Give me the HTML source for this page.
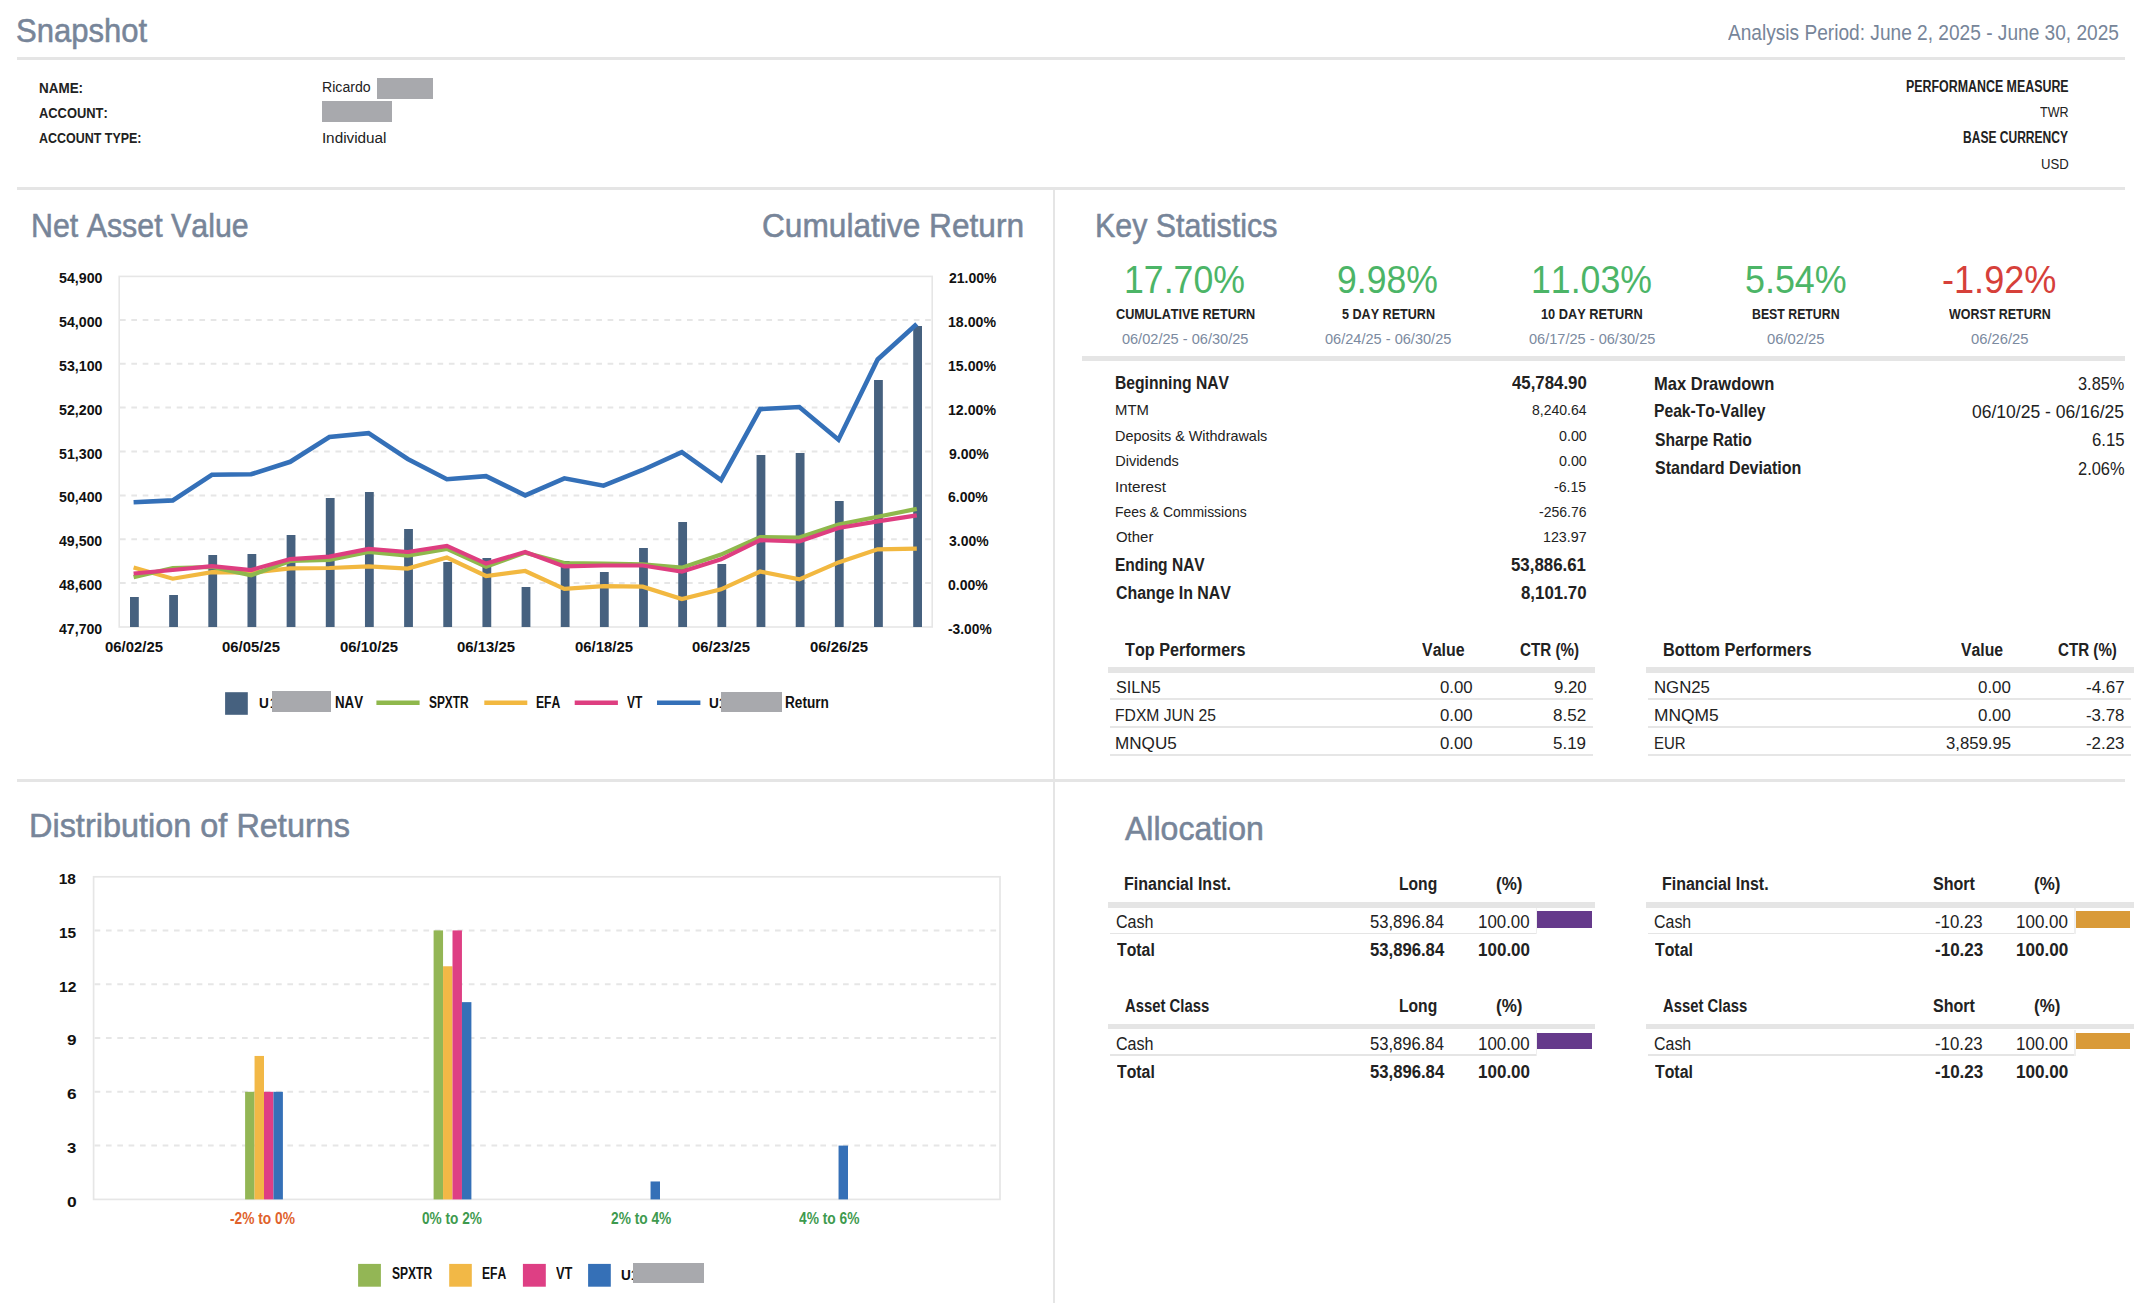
<!DOCTYPE html>
<html><head><meta charset="utf-8"><title>Snapshot</title>
<style>
html,body{margin:0;padding:0;background:#fff;}
body{width:2152px;height:1303px;position:relative;overflow:hidden;font-family:"Liberation Sans",sans-serif;}
.t{position:absolute;white-space:nowrap;transform-origin:0 0;font-kerning:none;z-index:3;}
.r{position:absolute;}
svg{position:absolute;left:0;top:0;}
</style></head><body>
<svg width="2152" height="1303" viewBox="0 0 2152 1303">
<rect x="119.2" y="276.4" width="813" height="350.6" fill="none" stroke="#e6e6e6" stroke-width="1.6"/>
<line x1="120" y1="319.88" x2="931" y2="319.88" stroke="#e6e6e6" stroke-width="2" stroke-dasharray="5.67 5.67"/>
<line x1="120" y1="363.75" x2="931" y2="363.75" stroke="#e6e6e6" stroke-width="2" stroke-dasharray="5.67 5.67"/>
<line x1="120" y1="407.62" x2="931" y2="407.62" stroke="#e6e6e6" stroke-width="2" stroke-dasharray="5.67 5.67"/>
<line x1="120" y1="451.50" x2="931" y2="451.50" stroke="#e6e6e6" stroke-width="2" stroke-dasharray="5.67 5.67"/>
<line x1="120" y1="495.38" x2="931" y2="495.38" stroke="#e6e6e6" stroke-width="2" stroke-dasharray="5.67 5.67"/>
<line x1="120" y1="539.25" x2="931" y2="539.25" stroke="#e6e6e6" stroke-width="2" stroke-dasharray="5.67 5.67"/>
<line x1="120" y1="583.12" x2="931" y2="583.12" stroke="#e6e6e6" stroke-width="2" stroke-dasharray="5.67 5.67"/>
<rect x="130.00" y="597.00" width="8.8" height="30.00" fill="#46617f"/>
<rect x="169.16" y="595.00" width="8.8" height="32.00" fill="#46617f"/>
<rect x="208.32" y="555.00" width="8.8" height="72.00" fill="#46617f"/>
<rect x="247.48" y="554.00" width="8.8" height="73.00" fill="#46617f"/>
<rect x="286.64" y="535.00" width="8.8" height="92.00" fill="#46617f"/>
<rect x="325.80" y="498.00" width="8.8" height="129.00" fill="#46617f"/>
<rect x="364.96" y="492.00" width="8.8" height="135.00" fill="#46617f"/>
<rect x="404.12" y="529.00" width="8.8" height="98.00" fill="#46617f"/>
<rect x="443.28" y="562.00" width="8.8" height="65.00" fill="#46617f"/>
<rect x="482.44" y="558.00" width="8.8" height="69.00" fill="#46617f"/>
<rect x="521.60" y="587.00" width="8.8" height="40.00" fill="#46617f"/>
<rect x="560.76" y="561.00" width="8.8" height="66.00" fill="#46617f"/>
<rect x="599.92" y="572.00" width="8.8" height="55.00" fill="#46617f"/>
<rect x="639.08" y="548.00" width="8.8" height="79.00" fill="#46617f"/>
<rect x="678.24" y="522.00" width="8.8" height="105.00" fill="#46617f"/>
<rect x="717.40" y="564.00" width="8.8" height="63.00" fill="#46617f"/>
<rect x="756.56" y="455.00" width="8.8" height="172.00" fill="#46617f"/>
<rect x="795.72" y="453.00" width="8.8" height="174.00" fill="#46617f"/>
<rect x="834.88" y="501.00" width="8.8" height="126.00" fill="#46617f"/>
<rect x="874.04" y="380.00" width="8.8" height="247.00" fill="#46617f"/>
<rect x="913.20" y="326.00" width="8.8" height="301.00" fill="#46617f"/>
<polyline points="133.60,567.50 172.76,578.70 211.92,572.20 251.08,572.70 290.24,568.30 329.40,568.00 368.56,566.40 407.72,568.60 446.88,557.50 486.04,576.00 525.20,571.00 564.36,588.90 603.52,586.10 642.68,586.70 681.84,599.00 721.00,589.30 760.16,571.50 799.32,579.40 838.48,562.40 877.64,549.30 916.80,548.60" fill="none" stroke="#f2b840" stroke-width="4.2" stroke-linejoin="miter" stroke-linecap="butt"/>
<polyline points="133.60,577.10 172.76,568.00 211.92,567.00 251.08,575.30 290.24,561.00 329.40,560.00 368.56,552.00 407.72,555.70 446.88,548.90 486.04,566.80 525.20,552.60 564.36,563.10 603.52,563.60 642.68,564.40 681.84,567.70 721.00,554.60 760.16,537.10 799.32,537.60 838.48,524.50 877.64,516.70 916.80,508.90" fill="none" stroke="#8fb84c" stroke-width="4.2" stroke-linejoin="miter" stroke-linecap="butt"/>
<polyline points="133.60,573.50 172.76,570.00 211.92,566.20 251.08,570.00 290.24,559.10 329.40,556.60 368.56,548.90 407.72,552.00 446.88,545.90 486.04,563.60 525.20,552.00 564.36,566.40 603.52,565.50 642.68,565.50 681.84,571.70 721.00,559.30 760.16,540.20 799.32,541.50 838.48,528.00 877.64,521.40 916.80,515.40" fill="none" stroke="#de3e80" stroke-width="4.2" stroke-linejoin="miter" stroke-linecap="butt"/>
<polyline points="133.60,502.20 172.76,500.40 211.92,474.80 251.08,474.30 290.24,461.80 329.40,437.00 368.56,433.20 407.72,459.00 446.88,479.20 486.04,476.10 525.20,495.40 564.36,478.30 603.52,485.70 642.68,470.00 681.84,452.10 721.00,480.20 760.16,409.10 799.32,407.00 838.48,439.70 877.64,359.50 916.80,324.00" fill="none" stroke="#3470b8" stroke-width="4.6" stroke-linejoin="miter" stroke-linecap="butt"/>
<rect x="225.1" y="692.2" width="22.7" height="22.6" fill="#46617f"/>
<line x1="376.4" y1="702.7" x2="419.6" y2="702.7" stroke="#8fb84c" stroke-width="4.5"/>
<line x1="484.3" y1="702.7" x2="527.3" y2="702.7" stroke="#f2b840" stroke-width="4.5"/>
<line x1="574.7" y1="702.7" x2="617.9" y2="702.7" stroke="#de3e80" stroke-width="4.5"/>
<line x1="657.0" y1="702.7" x2="700.4" y2="702.7" stroke="#3470b8" stroke-width="4.5"/>
<rect x="93.6" y="876.8" width="906.4" height="322.6" fill="none" stroke="#e6e6e6" stroke-width="1.7"/>
<line x1="94.6" y1="930.40" x2="999" y2="930.40" stroke="#e6e6e6" stroke-width="2" stroke-dasharray="5.67 5.67"/>
<line x1="94.6" y1="984.20" x2="999" y2="984.20" stroke="#e6e6e6" stroke-width="2" stroke-dasharray="5.67 5.67"/>
<line x1="94.6" y1="1038.00" x2="999" y2="1038.00" stroke="#e6e6e6" stroke-width="2" stroke-dasharray="5.67 5.67"/>
<line x1="94.6" y1="1091.80" x2="999" y2="1091.80" stroke="#e6e6e6" stroke-width="2" stroke-dasharray="5.67 5.67"/>
<line x1="94.6" y1="1145.60" x2="999" y2="1145.60" stroke="#e6e6e6" stroke-width="2" stroke-dasharray="5.67 5.67"/>
<rect x="245.10" y="1091.80" width="9.45" height="107.60" fill="#93b655"/>
<rect x="254.55" y="1055.94" width="9.45" height="143.46" fill="#f2b846"/>
<rect x="264.00" y="1091.80" width="9.45" height="107.60" fill="#de3f84"/>
<rect x="273.45" y="1091.80" width="9.45" height="107.60" fill="#3570b7"/>
<rect x="433.60" y="930.41" width="9.45" height="269.00" fill="#93b655"/>
<rect x="443.05" y="966.27" width="9.45" height="233.13" fill="#f2b846"/>
<rect x="452.50" y="930.41" width="9.45" height="269.00" fill="#de3f84"/>
<rect x="461.95" y="1002.14" width="9.45" height="197.26" fill="#3570b7"/>
<rect x="650.55" y="1181.47" width="9.45" height="17.93" fill="#3570b7"/>
<rect x="838.55" y="1145.60" width="9.45" height="53.80" fill="#3570b7"/>
<rect x="358.1" y="1263.9" width="22.8" height="22.8" fill="#93b655"/>
<rect x="449.2" y="1263.9" width="22.6" height="22.8" fill="#f2b846"/>
<rect x="522.9" y="1263.9" width="22.9" height="22.8" fill="#de3f84"/>
<rect x="588.1" y="1263.9" width="22.7" height="22.8" fill="#3570b7"/>
</svg>
<div class="t" style="left:16.29px;top:13.01px;font-size:34.00px;line-height:34.00px;color:#778599;transform:scaleX(0.9135);-webkit-text-stroke:0.55px #778599;">Snapshot</div>
<div class="t" style="left:1727.76px;top:22.88px;font-size:21.40px;line-height:21.40px;color:#778599;transform:scaleX(0.8934);">Analysis Period: June 2, 2025 - June 30, 2025</div>
<div class="r" style="left:17.00px;top:57.00px;width:2108.00px;height:3.00px;background:#e5e5e5;"></div>
<div class="t" style="left:38.90px;top:79.68px;font-size:15.50px;line-height:15.50px;color:#222222;font-weight:bold;transform:scaleX(0.8680);">NAME:</div>
<div class="t" style="left:39.48px;top:104.68px;font-size:15.50px;line-height:15.50px;color:#222222;font-weight:bold;transform:scaleX(0.8319);">ACCOUNT:</div>
<div class="t" style="left:39.49px;top:130.48px;font-size:15.50px;line-height:15.50px;color:#222222;font-weight:bold;transform:scaleX(0.8044);">ACCOUNT TYPE:</div>
<div class="t" style="left:322.14px;top:79.45px;font-size:15.30px;line-height:15.30px;color:#222222;transform:scaleX(0.9228);">Ricardo</div>
<div class="r" style="left:377.00px;top:78.20px;width:55.60px;height:20.70px;background:#a8a9ad;"></div>
<div class="r" style="left:322.20px;top:101.20px;width:69.80px;height:20.50px;background:#a8a9ad;"></div>
<div class="t" style="left:321.89px;top:130.25px;font-size:15.30px;line-height:15.30px;color:#222222;">Individual</div>
<div class="t" style="left:1905.97px;top:79.15px;font-size:16.00px;line-height:16.00px;color:#222222;font-weight:bold;transform:scaleX(0.7751);">PERFORMANCE MEASURE</div>
<div class="t" style="left:2040.12px;top:105.32px;font-size:14.50px;line-height:14.50px;color:#222222;transform:scaleX(0.8652);">TWR</div>
<div class="t" style="left:1963.29px;top:130.25px;font-size:16.00px;line-height:16.00px;color:#222222;font-weight:bold;transform:scaleX(0.7523);">BASE CURRENCY</div>
<div class="t" style="left:2040.99px;top:156.72px;font-size:14.50px;line-height:14.50px;color:#222222;transform:scaleX(0.9062);">USD</div>
<div class="r" style="left:17.00px;top:187.00px;width:2108.00px;height:3.00px;background:#e5e5e5;"></div>
<div class="r" style="left:1053.00px;top:190.00px;width:2.40px;height:1113.00px;background:#e5e5e5;"></div>
<div class="r" style="left:17.00px;top:779.00px;width:2108.00px;height:3.00px;background:#e5e5e5;"></div>
<div class="t" style="left:31.01px;top:208.80px;font-size:33.30px;line-height:33.30px;color:#778599;transform:scaleX(0.9119);-webkit-text-stroke:0.55px #778599;">Net Asset Value</div>
<div class="t" style="left:761.69px;top:208.50px;font-size:33.30px;line-height:33.30px;color:#778599;transform:scaleX(0.9503);-webkit-text-stroke:0.55px #778599;">Cumulative Return</div>
<div class="r" style="left:272.00px;top:691.30px;width:59.20px;height:20.50px;background:#a8a9ad;z-index:4;"></div>
<div class="r" style="left:721.40px;top:691.60px;width:60.90px;height:20.30px;background:#a8a9ad;z-index:4;"></div>
<div class="t" style="left:259.18px;top:694.73px;font-size:15.20px;line-height:15.20px;color:#111111;font-weight:bold;transform:scaleX(0.8975);">U</div>
<div class="t" style="left:269.60px;top:694.73px;font-size:15.20px;line-height:15.20px;color:#111111;font-weight:bold;transform:scaleX(0.7352);">1</div>
<div class="t" style="left:334.61px;top:694.62px;font-size:15.80px;line-height:15.80px;color:#111111;font-weight:bold;transform:scaleX(0.8418);">NAV</div>
<div class="t" style="left:428.66px;top:694.62px;font-size:15.80px;line-height:15.80px;color:#111111;font-weight:bold;transform:scaleX(0.7515);">SPXTR</div>
<div class="t" style="left:536.39px;top:694.62px;font-size:15.80px;line-height:15.80px;color:#111111;font-weight:bold;transform:scaleX(0.7701);">EFA</div>
<div class="t" style="left:627.42px;top:694.62px;font-size:15.80px;line-height:15.80px;color:#111111;font-weight:bold;transform:scaleX(0.7583);">VT</div>
<div class="t" style="left:708.68px;top:695.13px;font-size:15.20px;line-height:15.20px;color:#111111;font-weight:bold;transform:scaleX(0.8975);">U</div>
<div class="t" style="left:718.90px;top:695.13px;font-size:15.20px;line-height:15.20px;color:#111111;font-weight:bold;transform:scaleX(0.7352);">1</div>
<div class="t" style="left:785.29px;top:694.62px;font-size:15.80px;line-height:15.80px;color:#111111;font-weight:bold;transform:scaleX(0.8635);">Return</div>
<div class="t" style="left:59.06px;top:270.08px;font-size:15.50px;line-height:15.50px;color:#111111;font-weight:bold;transform:scaleX(0.9159);">54,900</div>
<div class="t" style="left:948.51px;top:270.08px;font-size:15.50px;line-height:15.50px;color:#111111;font-weight:bold;transform:scaleX(0.9046);">21.00%</div>
<div class="t" style="left:59.06px;top:313.95px;font-size:15.50px;line-height:15.50px;color:#111111;font-weight:bold;transform:scaleX(0.9159);">54,000</div>
<div class="t" style="left:948.11px;top:313.95px;font-size:15.50px;line-height:15.50px;color:#111111;font-weight:bold;transform:scaleX(0.9124);">18.00%</div>
<div class="t" style="left:59.06px;top:357.83px;font-size:15.50px;line-height:15.50px;color:#111111;font-weight:bold;transform:scaleX(0.9159);">53,100</div>
<div class="t" style="left:948.11px;top:357.83px;font-size:15.50px;line-height:15.50px;color:#111111;font-weight:bold;transform:scaleX(0.9124);">15.00%</div>
<div class="t" style="left:59.06px;top:401.70px;font-size:15.50px;line-height:15.50px;color:#111111;font-weight:bold;transform:scaleX(0.9159);">52,200</div>
<div class="t" style="left:948.11px;top:401.70px;font-size:15.50px;line-height:15.50px;color:#111111;font-weight:bold;transform:scaleX(0.9124);">12.00%</div>
<div class="t" style="left:59.06px;top:445.58px;font-size:15.50px;line-height:15.50px;color:#111111;font-weight:bold;transform:scaleX(0.9159);">51,300</div>
<div class="t" style="left:948.51px;top:445.58px;font-size:15.50px;line-height:15.50px;color:#111111;font-weight:bold;transform:scaleX(0.9046);">9.00%</div>
<div class="t" style="left:59.06px;top:489.45px;font-size:15.50px;line-height:15.50px;color:#111111;font-weight:bold;transform:scaleX(0.9159);">50,400</div>
<div class="t" style="left:948.49px;top:489.45px;font-size:15.50px;line-height:15.50px;color:#111111;font-weight:bold;transform:scaleX(0.9052);">6.00%</div>
<div class="t" style="left:59.29px;top:533.33px;font-size:15.50px;line-height:15.50px;color:#111111;font-weight:bold;transform:scaleX(0.9111);">49,500</div>
<div class="t" style="left:948.68px;top:533.33px;font-size:15.50px;line-height:15.50px;color:#111111;font-weight:bold;transform:scaleX(0.9008);">3.00%</div>
<div class="t" style="left:59.29px;top:577.20px;font-size:15.50px;line-height:15.50px;color:#111111;font-weight:bold;transform:scaleX(0.9111);">48,600</div>
<div class="t" style="left:948.44px;top:577.20px;font-size:15.50px;line-height:15.50px;color:#111111;font-weight:bold;transform:scaleX(0.9062);">0.00%</div>
<div class="t" style="left:59.29px;top:621.08px;font-size:15.50px;line-height:15.50px;color:#111111;font-weight:bold;transform:scaleX(0.9111);">47,700</div>
<div class="t" style="left:948.46px;top:621.08px;font-size:15.50px;line-height:15.50px;color:#111111;font-weight:bold;transform:scaleX(0.8899);">-3.00%</div>
<div class="t" style="left:105.01px;top:639.28px;font-size:15.50px;line-height:15.50px;color:#111111;font-weight:bold;transform:scaleX(0.9614);">06/02/25</div>
<div class="t" style="left:222.49px;top:639.28px;font-size:15.50px;line-height:15.50px;color:#111111;font-weight:bold;transform:scaleX(0.9614);">06/05/25</div>
<div class="t" style="left:339.97px;top:639.28px;font-size:15.50px;line-height:15.50px;color:#111111;font-weight:bold;transform:scaleX(0.9614);">06/10/25</div>
<div class="t" style="left:457.45px;top:639.28px;font-size:15.50px;line-height:15.50px;color:#111111;font-weight:bold;transform:scaleX(0.9614);">06/13/25</div>
<div class="t" style="left:574.93px;top:639.28px;font-size:15.50px;line-height:15.50px;color:#111111;font-weight:bold;transform:scaleX(0.9614);">06/18/25</div>
<div class="t" style="left:692.41px;top:639.28px;font-size:15.50px;line-height:15.50px;color:#111111;font-weight:bold;transform:scaleX(0.9614);">06/23/25</div>
<div class="t" style="left:809.89px;top:639.28px;font-size:15.50px;line-height:15.50px;color:#111111;font-weight:bold;transform:scaleX(0.9614);">06/26/25</div>
<div class="t" style="left:1095.21px;top:208.80px;font-size:33.30px;line-height:33.30px;color:#778599;transform:scaleX(0.9126);-webkit-text-stroke:0.55px #778599;">Key Statistics</div>
<div class="t" style="left:1123.98px;top:260.83px;font-size:38.00px;line-height:38.00px;color:#4cb567;transform:scaleX(0.9388);">17.70%</div>
<div class="t" style="left:1115.73px;top:306.21px;font-size:15.10px;line-height:15.10px;color:#222222;font-weight:bold;transform:scaleX(0.8385);">CUMULATIVE RETURN</div>
<div class="t" style="left:1121.88px;top:331.54px;font-size:14.60px;line-height:14.60px;color:#7b8aa0;">06/02/25 - 06/30/25</div>
<div class="t" style="left:1337.33px;top:260.83px;font-size:38.00px;line-height:38.00px;color:#4cb567;transform:scaleX(0.9368);">9.98%</div>
<div class="t" style="left:1341.71px;top:306.21px;font-size:15.10px;line-height:15.10px;color:#222222;font-weight:bold;transform:scaleX(0.8338);">5 DAY RETURN</div>
<div class="t" style="left:1324.83px;top:331.54px;font-size:14.60px;line-height:14.60px;color:#7b8aa0;transform:scaleX(0.9980);">06/24/25 - 06/30/25</div>
<div class="t" style="left:1530.58px;top:260.83px;font-size:38.00px;line-height:38.00px;color:#4cb567;transform:scaleX(0.9388);">11.03%</div>
<div class="t" style="left:1540.99px;top:306.21px;font-size:15.10px;line-height:15.10px;color:#222222;font-weight:bold;transform:scaleX(0.8474);">10 DAY RETURN</div>
<div class="t" style="left:1528.63px;top:331.54px;font-size:14.60px;line-height:14.60px;color:#7b8aa0;transform:scaleX(0.9980);">06/17/25 - 06/30/25</div>
<div class="t" style="left:1745.26px;top:260.83px;font-size:38.00px;line-height:38.00px;color:#4cb567;transform:scaleX(0.9440);">5.54%</div>
<div class="t" style="left:1752.43px;top:306.21px;font-size:15.10px;line-height:15.10px;color:#222222;font-weight:bold;transform:scaleX(0.8154);">BEST RETURN</div>
<div class="t" style="left:1767.42px;top:331.54px;font-size:14.60px;line-height:14.60px;color:#7b8aa0;transform:scaleX(1.0135);">06/02/25</div>
<div class="t" style="left:1942.15px;top:260.83px;font-size:38.00px;line-height:38.00px;color:#d6403a;transform:scaleX(0.9501);">-1.92%</div>
<div class="t" style="left:1949.09px;top:306.21px;font-size:15.10px;line-height:15.10px;color:#222222;font-weight:bold;transform:scaleX(0.8244);">WORST RETURN</div>
<div class="t" style="left:1970.72px;top:331.54px;font-size:14.60px;line-height:14.60px;color:#7b8aa0;transform:scaleX(1.0135);">06/26/25</div>
<div class="r" style="left:1082.00px;top:355.50px;width:1043.00px;height:5.80px;background:#e5e5e5;"></div>
<div class="t" style="left:1115.35px;top:374.10px;font-size:18.90px;line-height:18.90px;color:#222222;font-weight:bold;transform:scaleX(0.8292);">Beginning NAV</div>
<div class="t" style="left:1511.85px;top:374.10px;font-size:18.90px;line-height:18.90px;color:#222222;font-weight:bold;transform:scaleX(0.8901);">45,784.90</div>
<div class="t" style="left:1115.18px;top:402.92px;font-size:14.50px;line-height:14.50px;color:#222222;transform:scaleX(1.0250);">MTM</div>
<div class="t" style="left:1531.79px;top:402.92px;font-size:14.50px;line-height:14.50px;color:#222222;transform:scaleX(0.9677);">8,240.64</div>
<div class="t" style="left:1115.22px;top:429.32px;font-size:14.50px;line-height:14.50px;color:#222222;transform:scaleX(0.9948);">Deposits &amp; Withdrawals</div>
<div class="t" style="left:1558.74px;top:429.32px;font-size:14.50px;line-height:14.50px;color:#222222;transform:scaleX(0.9857);">0.00</div>
<div class="t" style="left:1115.21px;top:454.32px;font-size:14.50px;line-height:14.50px;color:#222222;">Dividends</div>
<div class="t" style="left:1558.74px;top:454.32px;font-size:14.50px;line-height:14.50px;color:#222222;transform:scaleX(0.9857);">0.00</div>
<div class="t" style="left:1114.99px;top:479.92px;font-size:14.50px;line-height:14.50px;color:#222222;transform:scaleX(1.0530);">Interest</div>
<div class="t" style="left:1554.37px;top:479.92px;font-size:14.50px;line-height:14.50px;color:#222222;transform:scaleX(0.9749);">-6.15</div>
<div class="t" style="left:1115.26px;top:505.02px;font-size:14.50px;line-height:14.50px;color:#222222;transform:scaleX(0.9611);">Fees &amp; Commissions</div>
<div class="t" style="left:1539.08px;top:505.02px;font-size:14.50px;line-height:14.50px;color:#222222;transform:scaleX(0.9667);">-256.76</div>
<div class="t" style="left:1115.69px;top:530.12px;font-size:14.50px;line-height:14.50px;color:#222222;transform:scaleX(1.0301);">Other</div>
<div class="t" style="left:1543.11px;top:530.12px;font-size:14.50px;line-height:14.50px;color:#222222;transform:scaleX(0.9832);">123.97</div>
<div class="t" style="left:1115.36px;top:555.50px;font-size:18.90px;line-height:18.90px;color:#222222;font-weight:bold;transform:scaleX(0.8219);">Ending NAV</div>
<div class="t" style="left:1511.48px;top:555.50px;font-size:18.90px;line-height:18.90px;color:#222222;font-weight:bold;transform:scaleX(0.8919);">53,886.61</div>
<div class="t" style="left:1115.75px;top:583.60px;font-size:18.90px;line-height:18.90px;color:#222222;font-weight:bold;transform:scaleX(0.8422);">Change In NAV</div>
<div class="t" style="left:1521.06px;top:583.60px;font-size:18.90px;line-height:18.90px;color:#222222;font-weight:bold;transform:scaleX(0.8920);">8,101.70</div>
<div class="t" style="left:1653.99px;top:374.54px;font-size:18.50px;line-height:18.50px;color:#222222;font-weight:bold;transform:scaleX(0.8936);">Max Drawdown</div>
<div class="t" style="left:2077.98px;top:375.93px;font-size:17.80px;line-height:17.80px;color:#222222;transform:scaleX(0.9195);">3.85%</div>
<div class="t" style="left:1654.05px;top:402.44px;font-size:18.50px;line-height:18.50px;color:#222222;font-weight:bold;transform:scaleX(0.8467);">Peak-To-Valley</div>
<div class="t" style="left:1972.31px;top:403.83px;font-size:17.80px;line-height:17.80px;color:#222222;transform:scaleX(0.9859);">06/10/25 - 06/16/25</div>
<div class="t" style="left:1654.65px;top:430.84px;font-size:18.50px;line-height:18.50px;color:#222222;font-weight:bold;transform:scaleX(0.8498);">Sharpe Ratio</div>
<div class="t" style="left:2091.85px;top:432.23px;font-size:17.80px;line-height:17.80px;color:#222222;transform:scaleX(0.9426);">6.15</div>
<div class="t" style="left:1654.64px;top:459.34px;font-size:18.50px;line-height:18.50px;color:#222222;font-weight:bold;transform:scaleX(0.8682);">Standard Deviation</div>
<div class="t" style="left:2077.77px;top:460.73px;font-size:17.80px;line-height:17.80px;color:#222222;transform:scaleX(0.9236);">2.06%</div>
<div class="t" style="left:1124.52px;top:641.01px;font-size:18.30px;line-height:18.30px;color:#222222;font-weight:bold;transform:scaleX(0.8846);">Top Performers</div>
<div class="t" style="left:1422.39px;top:641.01px;font-size:18.30px;line-height:18.30px;color:#222222;font-weight:bold;transform:scaleX(0.8716);">Value</div>
<div class="t" style="left:1519.78px;top:641.01px;font-size:18.30px;line-height:18.30px;color:#222222;font-weight:bold;transform:scaleX(0.8303);">CTR (%)</div>
<div class="r" style="left:1107.60px;top:667.30px;width:487.30px;height:5.40px;background:#e5e5e5;"></div>
<div class="t" style="left:1115.67px;top:678.54px;font-size:17.20px;line-height:17.20px;color:#222222;transform:scaleX(0.9374);">SILN5</div>
<div class="t" style="left:1440.14px;top:678.54px;font-size:17.20px;line-height:17.20px;color:#222222;transform:scaleX(0.9772);">0.00</div>
<div class="t" style="left:1553.51px;top:678.54px;font-size:17.20px;line-height:17.20px;color:#222222;transform:scaleX(0.9782);">9.20</div>
<div class="r" style="left:1110.00px;top:698.00px;width:483.20px;height:1.60px;background:#e6e6e6;"></div>
<div class="t" style="left:1115.11px;top:706.64px;font-size:17.20px;line-height:17.20px;color:#222222;transform:scaleX(0.9115);">FDXM JUN 25</div>
<div class="t" style="left:1440.14px;top:706.64px;font-size:17.20px;line-height:17.20px;color:#222222;transform:scaleX(0.9772);">0.00</div>
<div class="t" style="left:1553.26px;top:706.64px;font-size:17.20px;line-height:17.20px;color:#222222;transform:scaleX(0.9917);">8.52</div>
<div class="r" style="left:1110.00px;top:726.00px;width:483.20px;height:1.60px;background:#e6e6e6;"></div>
<div class="t" style="left:1115.00px;top:734.74px;font-size:17.20px;line-height:17.20px;color:#222222;transform:scaleX(0.9953);">MNQU5</div>
<div class="t" style="left:1440.14px;top:734.74px;font-size:17.20px;line-height:17.20px;color:#222222;transform:scaleX(0.9772);">0.00</div>
<div class="t" style="left:1553.32px;top:734.74px;font-size:17.20px;line-height:17.20px;color:#222222;transform:scaleX(0.9883);">5.19</div>
<div class="r" style="left:1110.00px;top:754.00px;width:483.20px;height:1.60px;background:#e6e6e6;"></div>
<div class="t" style="left:1662.91px;top:641.01px;font-size:18.30px;line-height:18.30px;color:#222222;font-weight:bold;transform:scaleX(0.8914);">Bottom Performers</div>
<div class="t" style="left:1961.09px;top:641.01px;font-size:18.30px;line-height:18.30px;color:#222222;font-weight:bold;transform:scaleX(0.8633);">Value</div>
<div class="t" style="left:2058.18px;top:641.01px;font-size:18.30px;line-height:18.30px;color:#222222;font-weight:bold;transform:scaleX(0.8289);">CTR (%)</div>
<div class="r" style="left:1646.00px;top:667.30px;width:487.50px;height:5.40px;background:#e5e5e5;"></div>
<div class="t" style="left:1653.72px;top:678.54px;font-size:17.20px;line-height:17.20px;color:#222222;transform:scaleX(0.9761);">NGN25</div>
<div class="t" style="left:1978.34px;top:678.54px;font-size:17.20px;line-height:17.20px;color:#222222;transform:scaleX(0.9834);">0.00</div>
<div class="t" style="left:2086.05px;top:678.54px;font-size:17.20px;line-height:17.20px;color:#222222;transform:scaleX(0.9847);">-4.67</div>
<div class="r" style="left:1648.40px;top:698.00px;width:482.60px;height:1.60px;background:#e6e6e6;"></div>
<div class="t" style="left:1653.67px;top:706.64px;font-size:17.20px;line-height:17.20px;color:#222222;transform:scaleX(1.0115);">MNQM5</div>
<div class="t" style="left:1978.34px;top:706.64px;font-size:17.20px;line-height:17.20px;color:#222222;transform:scaleX(0.9834);">0.00</div>
<div class="t" style="left:2086.05px;top:706.64px;font-size:17.20px;line-height:17.20px;color:#222222;transform:scaleX(0.9816);">-3.78</div>
<div class="r" style="left:1648.40px;top:726.00px;width:482.60px;height:1.60px;background:#e6e6e6;"></div>
<div class="t" style="left:1653.87px;top:734.74px;font-size:17.20px;line-height:17.20px;color:#222222;transform:scaleX(0.8708);">EUR</div>
<div class="t" style="left:1946.16px;top:734.74px;font-size:17.20px;line-height:17.20px;color:#222222;transform:scaleX(0.9729);">3,859.95</div>
<div class="t" style="left:2086.05px;top:734.74px;font-size:17.20px;line-height:17.20px;color:#222222;transform:scaleX(0.9819);">-2.23</div>
<div class="r" style="left:1648.40px;top:754.00px;width:482.60px;height:1.60px;background:#e6e6e6;"></div>
<div class="t" style="left:29.44px;top:809.10px;font-size:33.30px;line-height:33.30px;color:#778599;transform:scaleX(0.9745);-webkit-text-stroke:0.55px #778599;">Distribution of Returns</div>
<div class="t" style="left:58.72px;top:870.98px;font-size:15.50px;line-height:15.50px;color:#111111;font-weight:bold;">18</div>
<div class="t" style="left:58.73px;top:924.78px;font-size:15.50px;line-height:15.50px;color:#111111;font-weight:bold;transform:scaleX(0.9979);">15</div>
<div class="t" style="left:58.71px;top:978.58px;font-size:15.50px;line-height:15.50px;color:#111111;font-weight:bold;transform:scaleX(1.0100);">12</div>
<div class="t" style="left:66.61px;top:1032.38px;font-size:15.50px;line-height:15.50px;color:#111111;font-weight:bold;transform:scaleX(1.1055);">9</div>
<div class="t" style="left:66.57px;top:1086.18px;font-size:15.50px;line-height:15.50px;color:#111111;font-weight:bold;transform:scaleX(1.1077);">6</div>
<div class="t" style="left:66.82px;top:1139.98px;font-size:15.50px;line-height:15.50px;color:#111111;font-weight:bold;transform:scaleX(1.0773);">3</div>
<div class="t" style="left:66.51px;top:1193.78px;font-size:15.50px;line-height:15.50px;color:#111111;font-weight:bold;transform:scaleX(1.1259);">0</div>
<div class="t" style="left:230.36px;top:1210.95px;font-size:16.00px;line-height:16.00px;color:#e0622c;font-weight:bold;transform:scaleX(0.8588);">-2% to 0%</div>
<div class="t" style="left:422.26px;top:1210.95px;font-size:16.00px;line-height:16.00px;color:#3e9a4e;font-weight:bold;transform:scaleX(0.8528);">0% to 2%</div>
<div class="t" style="left:610.52px;top:1210.95px;font-size:16.00px;line-height:16.00px;color:#3e9a4e;font-weight:bold;transform:scaleX(0.8576);">2% to 4%</div>
<div class="t" style="left:798.99px;top:1210.95px;font-size:16.00px;line-height:16.00px;color:#3e9a4e;font-weight:bold;transform:scaleX(0.8595);">4% to 6%</div>
<div class="t" style="left:391.65px;top:1266.42px;font-size:15.80px;line-height:15.80px;color:#111111;font-weight:bold;transform:scaleX(0.7630);">SPXTR</div>
<div class="t" style="left:482.19px;top:1266.42px;font-size:15.80px;line-height:15.80px;color:#111111;font-weight:bold;transform:scaleX(0.7668);">EFA</div>
<div class="t" style="left:555.91px;top:1266.42px;font-size:15.80px;line-height:15.80px;color:#111111;font-weight:bold;transform:scaleX(0.8136);">VT</div>
<div class="t" style="left:620.98px;top:1266.93px;font-size:15.20px;line-height:15.20px;color:#111111;font-weight:bold;transform:scaleX(0.8975);">U</div>
<div class="t" style="left:630.50px;top:1266.93px;font-size:15.20px;line-height:15.20px;color:#111111;font-weight:bold;transform:scaleX(0.7352);">1</div>
<div class="r" style="left:632.90px;top:1263.20px;width:71.10px;height:20.20px;background:#a8a9ad;z-index:4;"></div>
<div class="t" style="left:1124.94px;top:812.20px;font-size:33.30px;line-height:33.30px;color:#778599;transform:scaleX(0.9616);-webkit-text-stroke:0.55px #778599;">Allocation</div>
<div class="t" style="left:1123.93px;top:875.40px;font-size:18.90px;line-height:18.90px;color:#222222;font-weight:bold;transform:scaleX(0.8481);">Financial Inst.</div>
<div class="t" style="left:1399.35px;top:875.40px;font-size:18.90px;line-height:18.90px;color:#222222;font-weight:bold;transform:scaleX(0.8270);">Long</div>
<div class="t" style="left:1495.75px;top:875.40px;font-size:18.90px;line-height:18.90px;color:#222222;font-weight:bold;transform:scaleX(0.9015);">(%)</div>
<div class="r" style="left:1108.10px;top:902.30px;width:486.60px;height:5.60px;background:#e5e5e5;"></div>
<div class="t" style="left:1115.88px;top:913.10px;font-size:18.90px;line-height:18.90px;color:#222222;transform:scaleX(0.8513);">Cash</div>
<div class="t" style="left:1370.33px;top:913.10px;font-size:18.90px;line-height:18.90px;color:#222222;transform:scaleX(0.8795);">53,896.84</div>
<div class="t" style="left:1478.21px;top:913.10px;font-size:18.90px;line-height:18.90px;color:#222222;transform:scaleX(0.8934);">100.00</div>
<div class="r" style="left:1536.70px;top:911.30px;width:54.90px;height:16.50px;background:#653a8b;"></div>
<div class="r" style="left:1110.10px;top:932.60px;width:425.60px;height:1.80px;background:#e5e5e5;"></div>
<div class="r" style="left:1535.70px;top:908.00px;width:1.20px;height:26.00px;background:#efefef;"></div>
<div class="t" style="left:1116.52px;top:941.00px;font-size:18.90px;line-height:18.90px;color:#222222;font-weight:bold;transform:scaleX(0.8372);">Total</div>
<div class="t" style="left:1370.49px;top:941.00px;font-size:18.90px;line-height:18.90px;color:#222222;font-weight:bold;transform:scaleX(0.8825);">53,896.84</div>
<div class="t" style="left:1478.43px;top:941.00px;font-size:18.90px;line-height:18.90px;color:#222222;font-weight:bold;transform:scaleX(0.9008);">100.00</div>
<div class="t" style="left:1662.23px;top:875.40px;font-size:18.90px;line-height:18.90px;color:#222222;font-weight:bold;transform:scaleX(0.8464);">Financial Inst.</div>
<div class="t" style="left:1933.04px;top:875.40px;font-size:18.90px;line-height:18.90px;color:#222222;font-weight:bold;transform:scaleX(0.8503);">Short</div>
<div class="t" style="left:2034.45px;top:875.40px;font-size:18.90px;line-height:18.90px;color:#222222;font-weight:bold;transform:scaleX(0.8978);">(%)</div>
<div class="r" style="left:1646.00px;top:902.30px;width:487.50px;height:5.60px;background:#e5e5e5;"></div>
<div class="t" style="left:1654.29px;top:913.10px;font-size:18.90px;line-height:18.90px;color:#222222;transform:scaleX(0.8442);">Cash</div>
<div class="t" style="left:1935.25px;top:913.10px;font-size:18.90px;line-height:18.90px;color:#222222;transform:scaleX(0.8898);">-10.23</div>
<div class="t" style="left:2016.21px;top:913.10px;font-size:18.90px;line-height:18.90px;color:#222222;transform:scaleX(0.8988);">100.00</div>
<div class="r" style="left:2074.90px;top:911.30px;width:54.90px;height:16.50px;background:#d99a38;"></div>
<div class="r" style="left:1648.00px;top:932.60px;width:426.40px;height:1.80px;background:#e5e5e5;"></div>
<div class="r" style="left:2074.40px;top:908.00px;width:1.20px;height:26.00px;background:#efefef;"></div>
<div class="t" style="left:1654.92px;top:941.00px;font-size:18.90px;line-height:18.90px;color:#222222;font-weight:bold;transform:scaleX(0.8395);">Total</div>
<div class="t" style="left:1935.33px;top:941.00px;font-size:18.90px;line-height:18.90px;color:#222222;font-weight:bold;transform:scaleX(0.9009);">-10.23</div>
<div class="t" style="left:2016.42px;top:941.00px;font-size:18.90px;line-height:18.90px;color:#222222;font-weight:bold;transform:scaleX(0.9061);">100.00</div>
<div class="t" style="left:1124.63px;top:997.00px;font-size:18.90px;line-height:18.90px;color:#222222;font-weight:bold;transform:scaleX(0.7865);">Asset Class</div>
<div class="t" style="left:1399.35px;top:997.00px;font-size:18.90px;line-height:18.90px;color:#222222;font-weight:bold;transform:scaleX(0.8270);">Long</div>
<div class="t" style="left:1495.75px;top:997.00px;font-size:18.90px;line-height:18.90px;color:#222222;font-weight:bold;transform:scaleX(0.9015);">(%)</div>
<div class="r" style="left:1108.10px;top:1023.90px;width:486.60px;height:5.60px;background:#e5e5e5;"></div>
<div class="t" style="left:1115.88px;top:1034.70px;font-size:18.90px;line-height:18.90px;color:#222222;transform:scaleX(0.8513);">Cash</div>
<div class="t" style="left:1370.33px;top:1034.70px;font-size:18.90px;line-height:18.90px;color:#222222;transform:scaleX(0.8795);">53,896.84</div>
<div class="t" style="left:1478.21px;top:1034.70px;font-size:18.90px;line-height:18.90px;color:#222222;transform:scaleX(0.8934);">100.00</div>
<div class="r" style="left:1536.70px;top:1032.90px;width:54.90px;height:16.50px;background:#653a8b;"></div>
<div class="r" style="left:1110.10px;top:1054.20px;width:425.60px;height:1.80px;background:#e5e5e5;"></div>
<div class="r" style="left:1535.70px;top:1029.60px;width:1.20px;height:26.00px;background:#efefef;"></div>
<div class="t" style="left:1116.52px;top:1062.60px;font-size:18.90px;line-height:18.90px;color:#222222;font-weight:bold;transform:scaleX(0.8372);">Total</div>
<div class="t" style="left:1370.49px;top:1062.60px;font-size:18.90px;line-height:18.90px;color:#222222;font-weight:bold;transform:scaleX(0.8825);">53,896.84</div>
<div class="t" style="left:1478.43px;top:1062.60px;font-size:18.90px;line-height:18.90px;color:#222222;font-weight:bold;transform:scaleX(0.9008);">100.00</div>
<div class="t" style="left:1662.93px;top:997.00px;font-size:18.90px;line-height:18.90px;color:#222222;font-weight:bold;transform:scaleX(0.7865);">Asset Class</div>
<div class="t" style="left:1933.04px;top:997.00px;font-size:18.90px;line-height:18.90px;color:#222222;font-weight:bold;transform:scaleX(0.8503);">Short</div>
<div class="t" style="left:2034.45px;top:997.00px;font-size:18.90px;line-height:18.90px;color:#222222;font-weight:bold;transform:scaleX(0.8978);">(%)</div>
<div class="r" style="left:1646.00px;top:1023.90px;width:487.50px;height:5.60px;background:#e5e5e5;"></div>
<div class="t" style="left:1654.29px;top:1034.70px;font-size:18.90px;line-height:18.90px;color:#222222;transform:scaleX(0.8442);">Cash</div>
<div class="t" style="left:1935.25px;top:1034.70px;font-size:18.90px;line-height:18.90px;color:#222222;transform:scaleX(0.8898);">-10.23</div>
<div class="t" style="left:2016.21px;top:1034.70px;font-size:18.90px;line-height:18.90px;color:#222222;transform:scaleX(0.8988);">100.00</div>
<div class="r" style="left:2074.90px;top:1032.90px;width:54.90px;height:16.50px;background:#d99a38;"></div>
<div class="r" style="left:1648.00px;top:1054.20px;width:426.40px;height:1.80px;background:#e5e5e5;"></div>
<div class="r" style="left:2074.40px;top:1029.60px;width:1.20px;height:26.00px;background:#efefef;"></div>
<div class="t" style="left:1654.92px;top:1062.60px;font-size:18.90px;line-height:18.90px;color:#222222;font-weight:bold;transform:scaleX(0.8395);">Total</div>
<div class="t" style="left:1935.33px;top:1062.60px;font-size:18.90px;line-height:18.90px;color:#222222;font-weight:bold;transform:scaleX(0.9009);">-10.23</div>
<div class="t" style="left:2016.42px;top:1062.60px;font-size:18.90px;line-height:18.90px;color:#222222;font-weight:bold;transform:scaleX(0.9061);">100.00</div>
</body></html>
